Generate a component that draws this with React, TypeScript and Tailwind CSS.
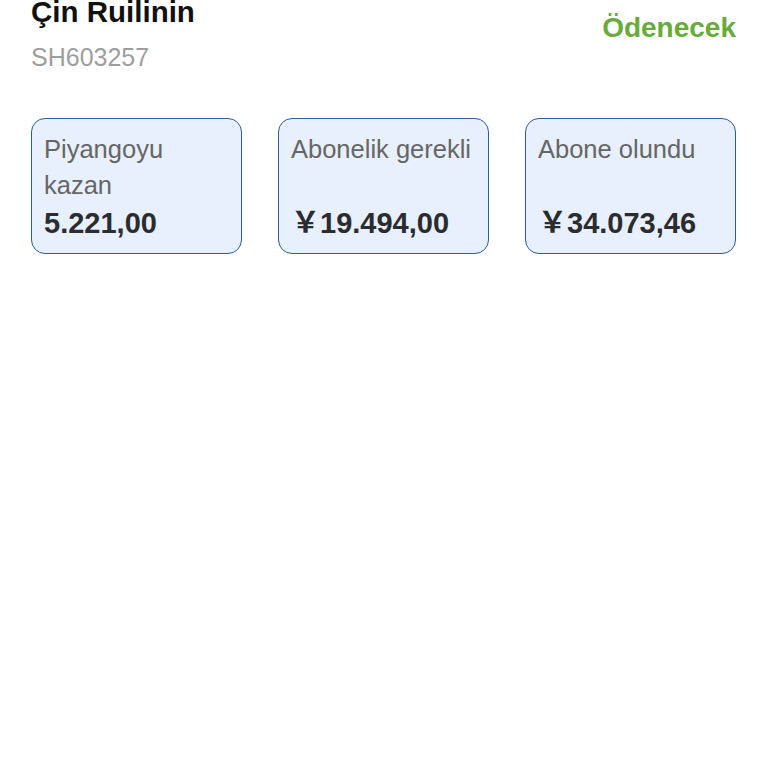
import React from "react";

const cards = [
  { label: "Piyangoyu kazan", value: "5.221,00" },
  { label: "Abonelik gerekli", value: "￥19.494,00" },
  { label: "Abone olundu", value: "￥34.073,46" },
];

export default function App() {
  return (
    <div
      className="w-[768px] h-[768px] bg-white overflow-hidden"
      style={{ fontFamily: '"Liberation Sans", "Noto Sans CJK SC", sans-serif' }}
    >
      <div className="mt-[-6px] pl-[31px] pr-[32px]">
        <div className="flex justify-between items-start">
          <div className="flex flex-col">
            <div className="text-[29.5px] leading-[35px] font-bold text-[#111111]">Çin Ruilinin</div>
            <div className="mt-[13px] text-[25px] leading-[30px] text-[#9e9e9e]">SH603257</div>
          </div>
          <div className="mt-[17px] text-[28px] leading-[34px] font-bold text-[#68ab3b]">Ödenecek</div>
        </div>
        <div className="mt-[46px] grid grid-cols-3 gap-[36px]">
          {cards.map((c) => (
            <div
              key={c.label}
              className="rounded-[14px] border-[1.5px] border-[#2e5c96] bg-[#e7f0fc] px-3 pt-3 pb-[13px]"
            >
              <div className="h-[75px] text-[25.5px] leading-[36px] text-[#666666]">{c.label}</div>
              <div className="text-[29px] leading-[34px] font-bold text-[#2a2c30] whitespace-nowrap">
                {c.value}
              </div>
            </div>
          ))}
        </div>
      </div>
    </div>
  );
}
